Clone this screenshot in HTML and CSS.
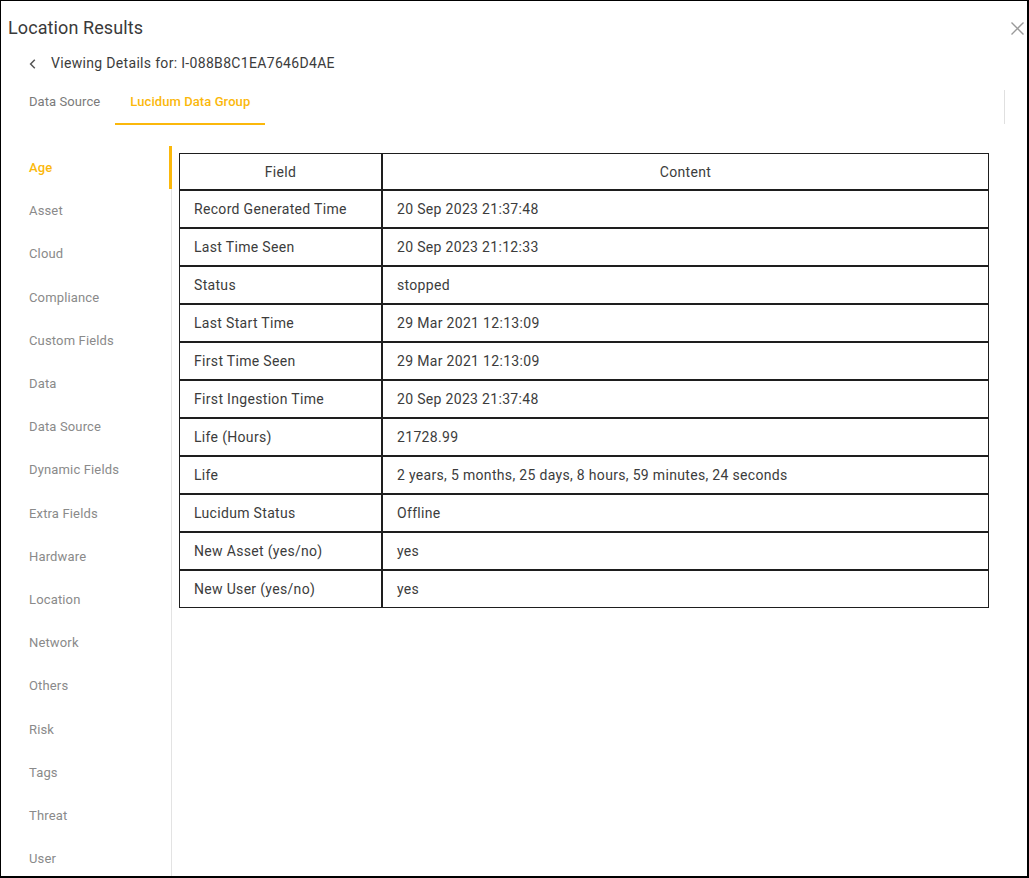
FILE: index.html
```html
<!DOCTYPE html>
<html>
<head>
<meta charset="utf-8">
<link rel="stylesheet" href="styles.css">
</head>
<body>
<div class="frame">
  <div class="title-row">
    <div class="title">Location Results</div>
    <svg class="close" width="13" height="13" viewBox="0 0 13 13"><path d="M0.5 0.5 L12.5 12.5 M12.5 0.5 L0.5 12.5" stroke="#9a9a9a" stroke-width="1.4" fill="none"/></svg>
  </div>
  <div class="back-row">
    <svg class="chev" width="7" height="10" viewBox="0 0 7 10"><path d="M5.8 0.8 L1.6 5 L5.8 9.2" stroke="#555" stroke-width="1.5" fill="none"/></svg>
    <span class="viewing">Viewing Details for: I-088B8C1EA7646D4AE</span>
  </div>
  <div class="tabs">
    <div class="tab">Data Source</div>
    <div class="tab active">Lucidum Data Group</div>
    <div class="tab-spacer"></div>
  </div>
  <div class="body">
    <div class="sidebar">
      <div class="side-item active">Age</div>
      <div class="side-item">Asset</div>
      <div class="side-item">Cloud</div>
      <div class="side-item">Compliance</div>
      <div class="side-item">Custom Fields</div>
      <div class="side-item">Data</div>
      <div class="side-item">Data Source</div>
      <div class="side-item">Dynamic Fields</div>
      <div class="side-item">Extra Fields</div>
      <div class="side-item">Hardware</div>
      <div class="side-item">Location</div>
      <div class="side-item">Network</div>
      <div class="side-item">Others</div>
      <div class="side-item">Risk</div>
      <div class="side-item">Tags</div>
      <div class="side-item">Threat</div>
      <div class="side-item">User</div>
    </div>
    <div class="main">
      <table class="grid">
        <thead>
          <tr><th class="c1">Field</th><th class="c2">Content</th></tr>
        </thead>
        <tbody>
          <tr><td>Record Generated Time</td><td>20 Sep 2023 21:37:48</td></tr>
          <tr><td>Last Time Seen</td><td>20 Sep 2023 21:12:33</td></tr>
          <tr><td>Status</td><td>stopped</td></tr>
          <tr><td>Last Start Time</td><td>29 Mar 2021 12:13:09</td></tr>
          <tr><td>First Time Seen</td><td>29 Mar 2021 12:13:09</td></tr>
          <tr><td>First Ingestion Time</td><td>20 Sep 2023 21:37:48</td></tr>
          <tr><td>Life (Hours)</td><td>21728.99</td></tr>
          <tr><td>Life</td><td>2 years, 5 months, 25 days, 8 hours, 59 minutes, 24 seconds</td></tr>
          <tr><td>Lucidum Status</td><td>Offline</td></tr>
          <tr><td>New Asset (yes/no)</td><td>yes</td></tr>
          <tr><td>New User (yes/no)</td><td>yes</td></tr>
        </tbody>
      </table>
    </div>
  </div>
</div>
</body>
</html>
```
FILE: styles.css
```css
* { box-sizing: border-box; }
html, body { margin: 0; padding: 0; background: #fff; }
body { font-family: Roboto, "Liberation Sans", sans-serif; color: #333; }

.frame {
  width: 1029px;
  height: 878px;
  border-style: solid;
  border-color: #000;
  border-width: 1px 2px 2px 1px;
  display: flex;
  flex-direction: column;
  overflow: hidden;
}

.title-row {
  height: 52px;
  display: flex;
  align-items: center;
  justify-content: space-between;
  padding: 0 3px 0 7px;
}
.title { font-size: 18px; color: #3a3a3a; letter-spacing: 0.1px; }
.close { margin-top: 2px; }

.back-row {
  height: 20px;
  display: flex;
  align-items: center;
  padding-left: 28px;
}
.chev { margin-right: 15px; margin-top: 1px; }
.viewing { font-size: 14px; color: #3c3c3c; letter-spacing: 0.32px; }

.tabs {
  margin-top: 8px;
  height: 44px;
  display: flex;
  padding-left: 13px;
  margin-right: 22px;
}
.tab {
  padding: 0 15px;
  font-size: 13px;
  color: #7a7a7a;
  letter-spacing: 0.08px;
  display: flex;
  align-items: center;
  padding-bottom: 2px;
  border-bottom: 2px solid transparent;
}
.tab.active {
  color: #fbb80b;
  font-weight: 500;
  border-bottom-color: #fbb80b;
}
.tab-spacer {
  flex: 1;
  border-right: 1px solid #e0e0e0;
  margin: 9px 0 1px;
}

.body {
  flex: 1;
  display: flex;
  padding-top: 21px;
  min-height: 0;
}

.sidebar {
  width: 171px;
  border-right: 1px solid #e3e3e3;
  display: flex;
  flex-direction: column;
}
.side-item {
  height: 43.2px;
  flex: none;
  display: flex;
  align-items: center;
  padding-left: 28px;
  font-size: 13px;
  color: #8a8a8a;
  letter-spacing: 0.15px;
  position: relative;
}
.side-item.active {
  color: #fbb80b;
  font-weight: 500;
}
.side-item.active::after {
  content: "";
  position: absolute;
  right: -1px;
  top: 0;
  width: 3px;
  height: 43px;
  background: #fbb80b;
}

.main {
  flex: 1;
  padding: 7px 0 0 7px;
}

.grid {
  border-collapse: separate;
  border-spacing: 0;
  width: 810px;
  font-size: 14px;
  color: #3c3c3c;
  letter-spacing: 0.32px;
}
.grid th, .grid td {
  border: 1px solid #1e1e1e;
  height: 38px;
  padding: 0 14px;
  text-align: left;
  font-weight: 400;
}
.grid th { text-align: center; height: 37px; }
.grid .c1 { width: 203px; }
```
